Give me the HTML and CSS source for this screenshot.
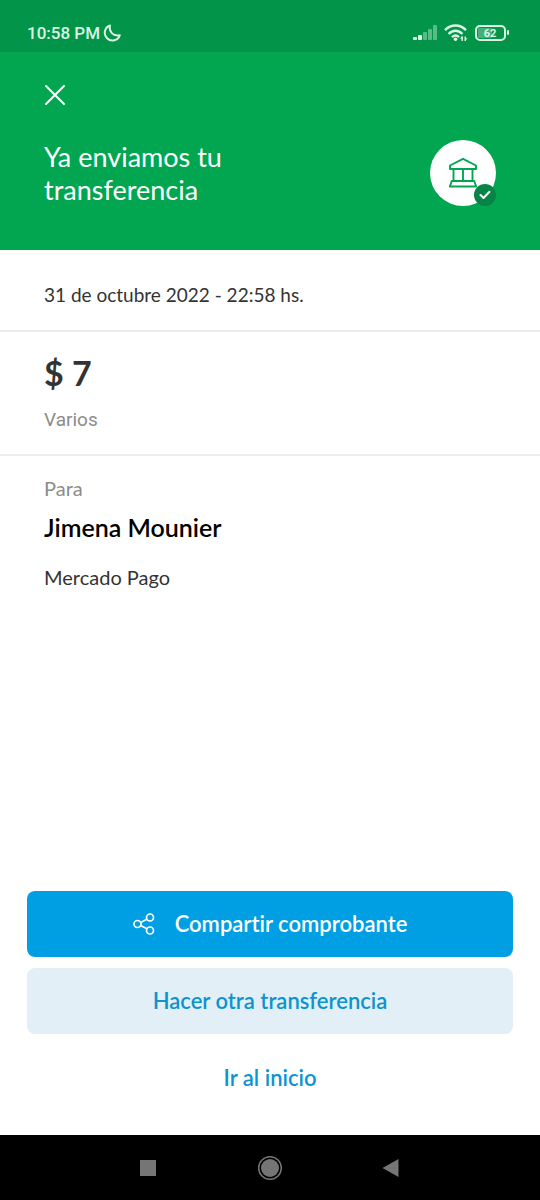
FILE: index.html
```html
<!DOCTYPE html>
<html lang="es">
<head>
<meta charset="utf-8">
<meta name="viewport" content="width=device-width, initial-scale=1">
<title>Transferencia enviada</title>
<link rel="stylesheet" href="styles.css">
</head>
<body>
<div class="screen">
  <div class="status-bar">
    <div class="status-left">
      <span class="clock">10:58 PM</span>
      <svg viewBox="0 0 18 18" width="18" height="18" fill="none" stroke="currentColor" stroke-width="2" stroke-linejoin="round" aria-hidden="true"><path d="M7 1.500C5.600 7.600 10 12.500 16.800 11.200A7.700 7.700 0 1 1 7 1.500Z"/></svg>
    </div>
    <div class="status-right">
      <svg viewBox="0 0 25 16" width="25" height="16" fill="currentColor" aria-hidden="true"><rect x="0" y="12" width="4" height="3" rx="1"/><rect x="5" y="10" width="4" height="5" rx="1"/><g opacity=".4"><rect x="10" y="7" width="4" height="8" rx="1"/><rect x="15" y="4" width="4" height="11" rx="1"/><rect x="20" y="0" width="4" height="15" rx="1"/></g></svg>
      <svg viewBox="0 0 24 18" width="24" height="18" fill="none" stroke="currentColor" stroke-width="2.400" aria-hidden="true"><path d="M1 6.200C7-.1 16-.1 22 6.200M4.600 10C8.700 5.700 14.300 5.700 18.400 10M8 13.200C10.300 11 12.700 11 15 13.200"/><circle cx="11.500" cy="15.200" r="1.800" fill="currentColor" stroke="none"/><path d="M18.200 12.500v4.500M21.200 12.500v4.500" stroke-width="1.400"/><path d="M16 14.800l2.200-3v3zM23.400 14.200l-2.200 3v-3z" fill="currentColor" stroke="none"/></svg>
      <svg viewBox="0 0 36 17" width="36" height="17" aria-hidden="true"><rect x="4" y="3" width="14" height="10" rx="1" fill="currentColor" opacity=".3"/><rect x="2" y="1" width="29" height="14" rx="4" fill="none" stroke="currentColor" stroke-width="2"/><rect x="33" y="5" width="2" height="5" rx="1" fill="currentColor"/><text x="16" y="12" text-anchor="middle" class="battery-text">62</text></svg>
    </div>
  </div>

  <header class="hero">
    <button class="close" type="button" aria-label="Cerrar"><svg viewBox="0 0 22 22" width="22" height="22" fill="none" stroke="currentColor" stroke-width="2" stroke-linecap="round" aria-hidden="true"><path d="M2 2l18 18M20 2L2 20"/></svg></button>
    <div class="hero-row">
      <h1 class="title">Ya enviamos tu transferencia</h1>
      <div class="avatar">
        <svg viewBox="0 0 30 32" width="30" height="32" fill="none" stroke="currentColor" stroke-width="1.900" stroke-linejoin="round" aria-hidden="true"><path d="M2 8.500L15 1.800l13 6.700V12H2zM5.500 12v12M15 12v12M24.500 12v12M3.800 24h22.400l2 5.500H1.800z"/></svg>
        <span class="badge"><svg viewBox="0 0 12 10" width="12" height="10" fill="none" stroke="currentColor" stroke-width="2" stroke-linecap="round" stroke-linejoin="round" aria-hidden="true"><path d="M1.500 5l3 3 6-6.200"/></svg></span>
      </div>
    </div>
  </header>

  <main class="details">
    <p class="date row">31 de octubre 2022 - 22:58 hs.</p>
    <section class="amount-block row">
      <p class="amount">$ 7</p>
      <p class="reason">Varios</p>
    </section>
    <section class="recipient">
      <p class="muted">Para</p>
      <h2 class="name">Jimena Mounier</h2>
      <p class="bank">Mercado Pago</p>
    </section>
  </main>

  <div class="actions">
    <button class="btn primary" type="button"><svg viewBox="0 0 22 22" width="22" height="22" fill="none" stroke="currentColor" stroke-width="1.700" aria-hidden="true"><circle cx="4.500" cy="11" r="3.500"/><circle cx="17" cy="4.500" r="3.500"/><circle cx="17" cy="17.500" r="3.500"/><path d="M7.700 9.500l6.200-3.300M7.700 12.500l6.200 3.300"/></svg><span>Compartir comprobante</span></button>
    <button class="btn secondary" type="button">Hacer otra transferencia</button>
    <button class="btn plain" type="button">Ir al inicio</button>
  </div>

  <nav class="system-nav" aria-label="Sistema">
    <button type="button" aria-label="Recientes"><svg viewBox="0 0 26 26" width="26" height="26" fill="currentColor" aria-hidden="true"><rect x="5" y="5" width="16" height="16"/></svg></button>
    <button type="button" aria-label="Inicio"><svg viewBox="0 0 26 26" width="26" height="26" aria-hidden="true"><circle cx="13" cy="13" r="11.300" fill="none" stroke="currentColor" stroke-width="1.500"/><circle cx="13" cy="13" r="9" fill="currentColor"/></svg></button>
    <button type="button" aria-label="Atrás"><svg viewBox="0 0 26 26" width="26" height="26" fill="currentColor" aria-hidden="true"><path d="M19.500 4v18L3.500 13z"/></svg></button>
  </nav>
</div>
</body>
</html>
```
FILE: styles.css
```css
* { box-sizing: border-box; }

body {
  margin: 0;
  background: #fff;
  color: #333;
  font-family: Lato, "Open Sans", sans-serif;
  font-variant-ligatures: none;
}

h1, h2, p { margin: 0; font-weight: 400; }

button {
  padding: 0;
  border: 0;
  background: none;
  color: inherit;
  font: inherit;
  font-variant-ligatures: none;
  cursor: pointer;
}

svg { display: block; flex: none; }

.screen {
  display: flex;
  flex-direction: column;
  min-height: 100vh;
}

.status-bar {
  display: flex;
  align-items: center;
  justify-content: space-between;
  height: 52px;
  padding: 14px 30px 0 27px;
  background: #029549;
  color: #dcf5e4;
  font-family: Roboto, sans-serif;
}

.status-left, .status-right {
  display: flex;
  align-items: center;
}

.status-left { gap: 3px; }
.status-right { gap: 6px; }

.clock {
  font-size: 17px;
  font-weight: 500;
  line-height: 24px;
}

.battery-text {
  fill: currentColor;
  font-size: 11px;
  font-weight: 700;
}

.hero {
  padding: 32px 44px 44px;
  background: #02a650;
  color: #fff;
}

.close { display: block; }

.hero-row {
  display: flex;
  align-items: center;
  justify-content: space-between;
  margin-top: 34px;
}

.title {
  max-width: 240px;
  font-size: 27px;
  line-height: 33px;
}

.avatar {
  position: relative;
  display: grid;
  place-items: center;
  flex: none;
  width: 66px;
  height: 66px;
  border-radius: 50%;
  background: #fff;
  color: #02a650;
}

.badge {
  position: absolute;
  right: 0;
  bottom: 0;
  display: grid;
  place-items: center;
  width: 22px;
  height: 22px;
  border-radius: 50%;
  background: #078345;
  color: #fff;
}

.row { border-bottom: 2px solid #ededed; }

.date {
  padding: 33px 44px 23px;
  font-size: 19px;
  line-height: 24px;
}

.amount-block { padding: 19px 44px 22px; }

.amount {
  font-size: 34px;
  font-weight: 700;
  line-height: 44px;
}

.reason {
  margin-top: 13px;
  color: #8c8c8c;
  font-family: Roboto, sans-serif;
  font-size: 19px;
  line-height: 24px;
}

.recipient { padding: 20px 44px; }

.muted {
  color: #8c8c8c;
  font-size: 20px;
  line-height: 24px;
}

.name {
  margin-top: 12px;
  color: #000;
  font-size: 25px;
  font-weight: 600;
  line-height: 30px;
}

.bank {
  margin-top: 23px;
  font-size: 20px;
  line-height: 24px;
}

.actions {
  display: flex;
  flex-direction: column;
  gap: 11px;
  margin-top: auto;
  padding: 0 27px 24px;
}

.btn {
  display: flex;
  align-items: center;
  justify-content: center;
  gap: 20px;
  min-height: 66px;
  border-radius: 8px;
  color: #0d94cf;
  font-size: 22px;
  font-weight: 600;
  line-height: 28px;
}

.primary { background: #009ee3; color: #fff; }
.secondary { background: #e2eff7; }

.system-nav {
  display: flex;
  align-items: center;
  justify-content: center;
  gap: 96px;
  height: 65px;
  background: #000;
  color: #757575;
}
```
